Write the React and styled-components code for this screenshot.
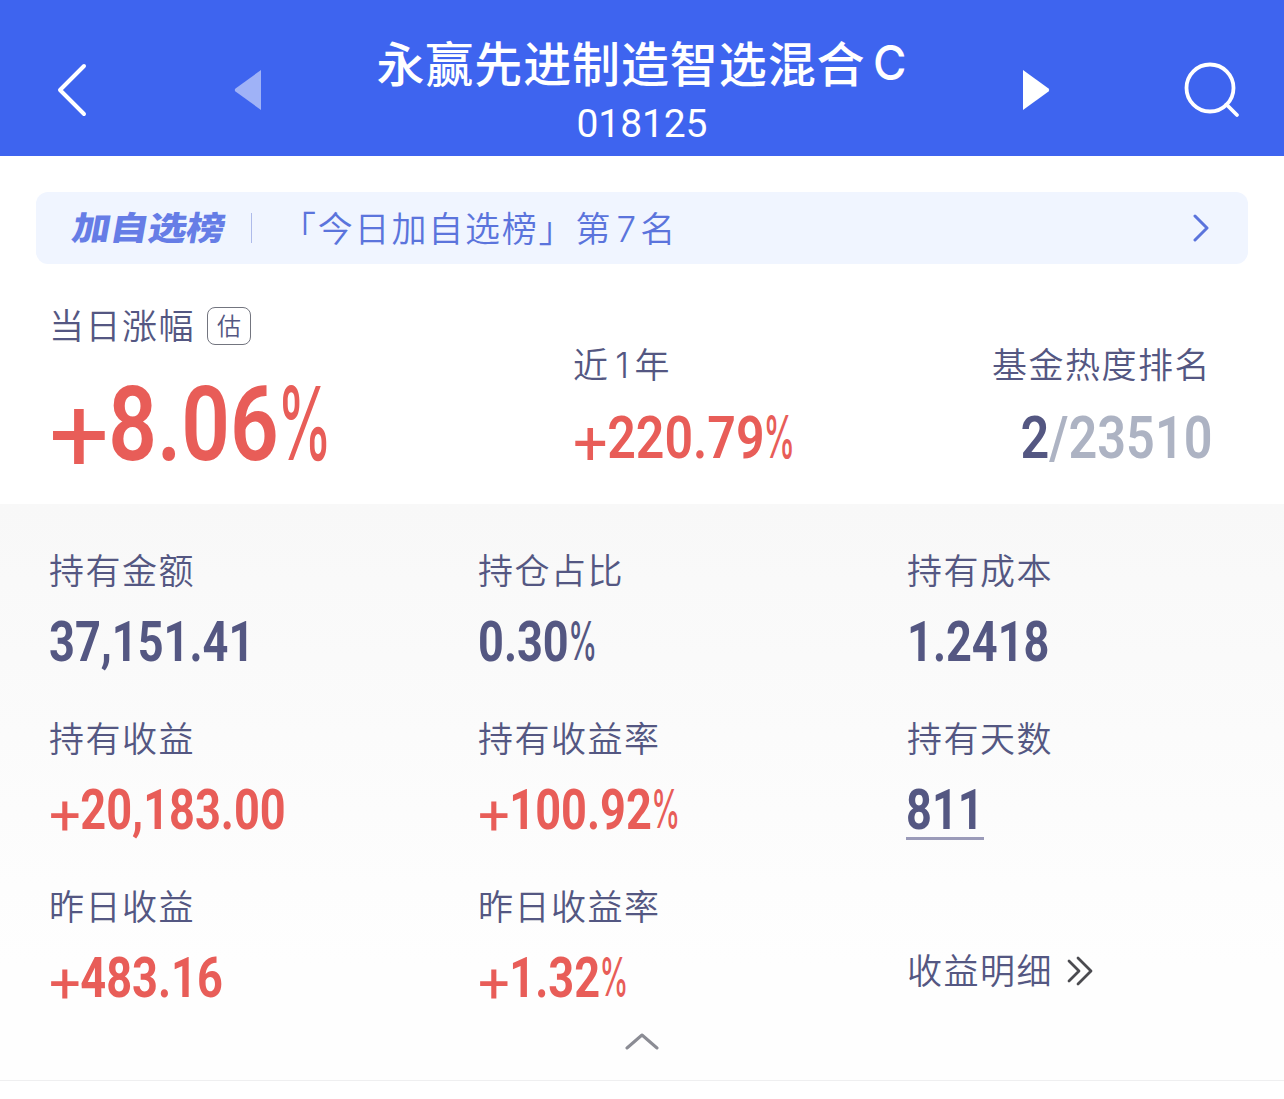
import React from "react";
import styled, { createGlobalStyle } from "styled-components";

const RED = "#e85d58";
const INK = "#545782";
const CJK = '"Noto Sans CJK SC", sans-serif';

const GlobalStyle = createGlobalStyle`
  * { box-sizing: border-box; }
  body { margin: 0; background: #fff; font-family: ${CJK}; color: ${INK}; }
`;

const Page = styled.main`
  width: 1284px;
  height: 1099px;
  overflow: hidden;
  background: #fff;
`;

const Header = styled.header`
  display: flex;
  align-items: center;
  justify-content: space-between;
  height: 156px;
  padding: 24px 40px 0 54px;
  background: #3e64ef;
  color: #fff;
`;

const HeaderSide = styled.div`
  display: flex;
  align-items: center;
  justify-content: space-between;
  width: ${(p) => p.$width}px;
`;

const IconButton = styled.button`
  display: flex;
  padding: 0;
  border: 0;
  background: none;
  color: inherit;
`;

const TitleBlock = styled.div`
  display: flex;
  flex-direction: column;
  align-items: center;
  height: 132px;
`;

const Title = styled.h1`
  display: flex;
  gap: 7px;
  height: 64px;
  margin: 5px 0 0 1px;
  font: 500 48px/64px ${CJK};
  letter-spacing: 0.9px;
  white-space: nowrap;
`;

const TitleSuffix = styled.span`
  padding-top: 2px;
  font-family: Inter, sans-serif;
  transform: scaleX(0.95);
`;

const Code = styled.div`
  margin-top: 7px;
  font: 400 39px/48px Roboto, sans-serif;
  letter-spacing: -0.1px;
`;

const Banner = styled.section`
  display: flex;
  align-items: center;
  height: 72px;
  margin: 36px 36px 0;
  padding: 0 38px 0 38px;
  border-radius: 12px;
  background: #f0f5ff;
  color: #5b74dc;
`;

const BannerMark = styled.strong`
  width: 177px;
  font: 900 35px/50px ${CJK};
  color: #667de6;
  letter-spacing: -0.4px;
  transform: translate(-1px, -2px) skewX(-10deg) scale(1.1, 0.94);
  transform-origin: left center;
`;

const BannerRule = styled.i`
  width: 1px;
  height: 30px;
  background: #aebbea;
`;

const BannerText = styled.span`
  flex: 1;
  margin: -2px 0 0 29px;
  font: 350 35px/50px ${CJK};
  letter-spacing: 1.8px;
`;

const Numeral = styled.span`
  display: inline-block;
  width: ${(p) => p.$width}px;
  font-family: Inter, sans-serif;
  font-size: 35px;
  line-height: 1;
  letter-spacing: 0;
  text-align: center;
`;

const Summary = styled.section`
  display: flex;
  height: 240px;
  padding: 35px 73px 0 49px;
`;

const SummaryItem = styled.div`
  display: flex;
  flex-direction: column;
  align-items: ${(p) => (p.$end ? "flex-end" : "flex-start")};
  width: ${(p) => p.$width}px;
  padding-top: ${(p) => p.$top}px;
`;

const LabelRow = styled.div`
  display: flex;
  align-items: center;
  gap: 12px;
`;

const Label = styled.div`
  height: 50px;
  font: 350 35px/50px ${CJK};
  letter-spacing: 1.5px;
  white-space: nowrap;
`;

const Tag = styled.span`
  width: 44px;
  height: 38px;
  margin-top: 4px;
  border: 1.5px solid #73757f;
  border-radius: 8px;
  font: 350 24px/34px ${CJK};
  text-align: center;
`;

const Figure = styled.div`
  display: flex;
  margin-top: ${(p) => p.$gap}px;
  margin-right: ${(p) => (p.$end ? -1 : 0)}px;
  font: ${(p) => p.$weight} ${(p) => p.$size}px/1.2 Roboto, sans-serif;
  color: ${(p) => p.$color};
  transform: scaleX(${(p) => p.$scale});
  transform-origin: ${(p) => (p.$end ? "right" : "left")} center;
  white-space: nowrap;
`;

const Plus = styled.span`
  width: ${(p) => 0.57 / p.$scale}em;
  font-weight: 400;
  transform: translateY(0.1em) scale(${(p) => 1.02 / p.$scale}, 1.02);
  transform-origin: left center;
`;

const Percent = styled.span`
  width: ${(p) => 0.46 / p.$scale}em;
  font-family: Inter, sans-serif;
  font-weight: 500;
  transform: translate(-0.015em, -0.025em) scale(${(p) => 0.53 / p.$scale}, 0.978);
  transform-origin: left center;
`;

const Total = styled.span`
  color: #adb3c3;
`;

const Holdings = styled.section`
  height: 577px;
  padding: 40px 0 0 49px;
  border-bottom: 1px solid #efeff0;
  background: linear-gradient(#f8f8f8, #fefefe 80%);
`;

const Grid = styled.div`
  display: grid;
  grid-template-columns: repeat(3, 429px);
  grid-auto-rows: 168px;
  height: 477px;
`;

const Cell = styled.div`
  display: flex;
  flex-direction: column;
  align-items: flex-start;
`;

const Underlined = styled.div`
  width: 78px;
  height: 78px;
  margin-left: -1px;
  border-bottom: 3px solid #9b9bb9;
`;

const Detail = styled.div`
  display: flex;
  align-items: center;
  align-self: start;
  gap: 13px;
  padding-top: 64px;

  svg { margin-top: 4px; }
`;

const Collapse = styled.div`
  display: flex;
  justify-content: center;
  margin: 11px 0 0 -49px;
`;

function Value({ text, size = 55, gap = 14.5, weight = 700, scale = 0.82 }) {
  const plus = text.startsWith("+");
  const percent = text.endsWith("%");
  const digits = text.replace(/[+%]/g, "");
  return (
    <Figure $color={plus ? RED : INK} $size={size} $gap={gap} $weight={weight} $scale={scale}>
      {plus && <Plus $scale={scale}>+</Plus>}
      <span>{digits}</span>
      {percent && <Percent $scale={scale}>%</Percent>}
    </Figure>
  );
}

const holdings = [
  ["持有金额", "37,151.41"],
  ["持仓占比", "0.30%"],
  ["持有成本", "1.2418"],
  ["持有收益", "+20,183.00"],
  ["持有收益率", "+100.92%"],
  ["持有天数", "811", true],
  ["昨日收益", "+483.16"],
  ["昨日收益率", "+1.32%"],
];

export default function App() {
  return (
    <Page>
      <GlobalStyle />
      <Header>
        <HeaderSide $width={208}>
          <IconButton aria-label="返回">
            <svg width="36" height="56" viewBox="0 0 36 56" fill="none" stroke="currentColor" strokeWidth="4" strokeLinecap="round" strokeLinejoin="round">
              <path d="M30 4 6 28 30 52" />
            </svg>
          </IconButton>
          <IconButton aria-label="上一只">
            <svg width="28" height="40" viewBox="0 0 28 40" fill="#9fb2f7">
              <path d="M27 0V40L1.5 21.5Q0 20 1.5 18.5Z" />
            </svg>
          </IconButton>
        </HeaderSide>
        <TitleBlock>
          <Title>永赢先进制造智选混合<TitleSuffix>C</TitleSuffix></Title>
          <Code>018125</Code>
        </TitleBlock>
        <HeaderSide $width={222}>
          <IconButton aria-label="下一只">
            <svg width="28" height="40" viewBox="0 0 28 40" fill="currentColor">
              <path d="M1 0V40L26.5 21.5Q28 20 26.5 18.5Z" />
            </svg>
          </IconButton>
          <IconButton aria-label="搜索">
            <svg width="60" height="60" viewBox="0 0 60 60" fill="none" stroke="currentColor" strokeWidth="3.8" strokeLinecap="round">
              <circle cx="26" cy="28" r="23.5" />
              <path d="M42.5 44.5 53 55" />
            </svg>
          </IconButton>
        </HeaderSide>
      </Header>

      <Banner>
        <BannerMark>加自选榜</BannerMark>
        <BannerRule />
        <BannerText>「今日加自选榜」第<Numeral $width={28}>7</Numeral>名</BannerText>
        <svg width="18" height="28" viewBox="0 0 18 28" fill="none" stroke="currentColor" strokeWidth="3" strokeLinecap="round" strokeLinejoin="round">
          <path d="M3 2 15 14 3 26" />
        </svg>
      </Banner>

      <Summary>
        <SummaryItem $width={524} $top={0}>
          <LabelRow>
            <Label>当日涨幅</Label>
            <Tag>估</Tag>
          </LabelRow>
          <Value text="+8.06%" size={104} gap={14} weight={600} />
        </SummaryItem>
        <SummaryItem $width={240} $top={39}>
          <Label>近<Numeral $width={25}>1</Numeral>年</Label>
          <Value text="+220.79%" size={60} gap={14} weight={600} scale={0.835} />
        </SummaryItem>
        <SummaryItem $width={398} $top={39} $end>
          <Label>基金热度排名</Label>
          <Figure $size={60} $gap={14} $weight={600} $scale={0.84} $color={INK} $end>
            2<Total>/23510</Total>
          </Figure>
        </SummaryItem>
      </Summary>

      <Holdings>
        <Grid>
          {holdings.map(([label, text, underlined]) => (
            <Cell key={label}>
              <Label>{label}</Label>
              {underlined ? (
                <Underlined>
                  <Value text={text} />
                </Underlined>
              ) : (
                <Value text={text} />
              )}
            </Cell>
          ))}
          <Detail>
            <Label>收益明细</Label>
            <svg width="27" height="30" viewBox="0 0 27 30" fill="none" stroke="#4b4b50" strokeWidth="2.8" strokeLinecap="round" strokeLinejoin="round">
              <path d="M3 5 13 15 3 25M12 2 25 15 12 28" />
            </svg>
          </Detail>
        </Grid>
        <Collapse>
          <svg width="36" height="18" viewBox="0 0 36 18" fill="none" stroke="#8b8c94" strokeWidth="3" strokeLinecap="round" strokeLinejoin="round">
            <path d="M3 16 18 3 33 16" />
          </svg>
        </Collapse>
      </Holdings>
    </Page>
  );
}
